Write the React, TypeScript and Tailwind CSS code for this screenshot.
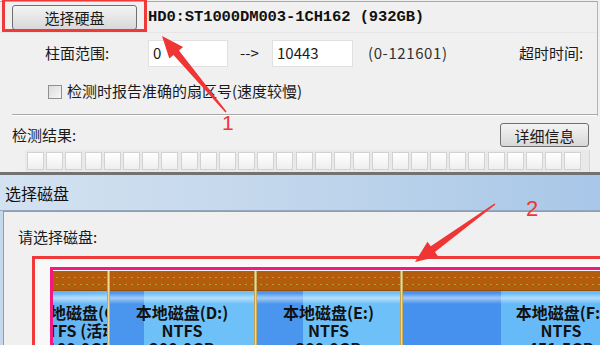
import React from "react";

const cjk = "font-['Noto_Sans_CJK_SC',sans-serif]";

function Cell({
  widthClass,
  bgClass,
  lines,
}: {
  widthClass: string;
  bgClass: string;
  lines: string[];
}) {
  return (
    <div className={`${widthClass} shrink-0 h-full flex flex-col overflow-hidden`}>
      <div className="h-[20px] shrink-0 bg-[#b25c0c] bg-[radial-gradient(circle,#a8a23c_0.7px,transparent_1.1px)] bg-[length:6px_7px] bg-[position:1px_3px] border-b border-[#94500a]" />
      <div className={`flex-1 ${bgClass} flex flex-col items-center pt-[12px] leading-[18px] text-[16px] font-bold text-[#111] whitespace-nowrap`}>
        {lines.map((l) => (
          <div key={l} className="h-[18px]">{l}</div>
        ))}
      </div>
    </div>
  );
}

function Divider() {
  return <div className="w-[3px] shrink-0 h-full bg-[linear-gradient(to_right,#a88a3c,#f0d890,#b89a48)]" />;
}

export default function App() {
  const cells = Array.from({ length: 29 }, (_, i) => i);
  return (
    <div className={`relative w-[600px] h-[345px] overflow-hidden bg-[#f0f0f0] ${cjk} text-[#1a1a1a]`}>
      {/* main window */}
      <div className="h-[172px] flex flex-col pt-[1px]">
        <div className="w-[598px] border-r border-[#b4b4b4] flex flex-col">
          <div className="h-px bg-[#a8a8a8]" />
          {/* row 1 */}
          <div className="h-[31px] pt-[3px] pl-[12px] flex items-start border-b border-[#e6e6e6]">
            <div className="w-[125px] h-[25px] rounded-[3px] border border-[#707070] bg-[linear-gradient(to_bottom,#f4f4f4,#e6e6e6_50%,#d8d8d8)] flex items-center justify-center text-[15px] leading-none">
              选择硬盘
            </div>
            <div className="ml-[11px] h-[25px] flex items-center font-['Liberation_Mono','Noto_Sans_CJK_SC',monospace] font-bold text-[15.5px] tracking-[-0.1px] text-[#111]">
              HD0:ST1000DM003-1CH162 (932GB)
            </div>
          </div>
          {/* row 2 */}
          <div className="mt-[7px] h-[27px] flex items-center text-[15px]">
            <div className="pl-[45px] w-[148px]">柱面范围:</div>
            <div className="w-[80px] h-[27px] bg-white border border-[#e0e0e0] flex items-center pl-[4px] text-[15px]">0</div>
            <div className="ml-[12px] w-[32px] text-[15px]">--&gt;</div>
            <div className="w-[81px] h-[27px] bg-white border border-[#e0e0e0] flex items-center pl-[4px] text-[15px]">10443</div>
            <div className="ml-[15px] w-[151px] text-[15px] tracking-[0.6px] text-[#333]">(0-121601)</div>
            <div className="text-[15px]">超时时间:</div>
          </div>
          {/* row 3 */}
          <div className="mt-[17px] h-[15px] flex items-center text-[15px]">
            <div className="ml-[48px] w-[14px] h-[14px] border border-[#8e8f8f] bg-[linear-gradient(135deg,#dcdcdc,#f6f6f6)]" />
            <div className="ml-[5px] whitespace-nowrap">检测时报告准确的扇区号(速度较慢)</div>
          </div>
          <div className="mt-[15px] ml-[12px] h-[2px] bg-[#a8a8a8] border-b border-white" />
        </div>
        {/* row 4 */}
        <div className="mt-[7px] h-[24px] flex items-center text-[15px]">
          <div className="ml-[12px] flex-1">检测结果:</div>
          <div className="mr-[11px] w-[89px] h-[24px] rounded-[3px] border border-[#707070] bg-[linear-gradient(to_bottom,#f4f4f4,#e6e6e6_50%,#d8d8d8)] flex items-center justify-center leading-none">
            详细信息
          </div>
        </div>
        {/* grid */}
        <div className="mt-[3px] ml-[25px] w-[565px] h-[22px] bg-[#e9e9e9] border-r border-[#d6d6d6] flex gap-[2.2px] px-[2px] pt-[2px]">
          {cells.map((i) => (
            <div key={i} className="w-[17px] h-[18px] shrink-0 border border-[#d2d2d2] bg-[linear-gradient(to_bottom,#ffffff,#eeeeee)]" />
          ))}
        </div>
      </div>

      {/* dialog */}
      <div className="h-[3px] bg-[#727272]" />
      <div className="h-[36px] bg-[linear-gradient(to_right,#d3e2f1,#c3d7ec_45%,#a8c7e8)] border-b border-[#94a8bf] flex items-center pl-[5px] text-[16px] text-[#111]">
        选择磁盘
      </div>
      <div className="flex h-[140px] bg-[#c6d8ec]">
        <div className="ml-[3px] flex-1 border-l border-t border-[#9a9a9a] bg-[#f0f0f0] flex flex-col">
          <div className="mt-[16px] pl-[14px] h-[18px] leading-[18px] text-[15px]">请选择磁盘:</div>
          <div className="mt-[10px] ml-[28px] w-[700px] flex-1 border-[3px] border-r-0 border-b-0 border-[#f03a3a] bg-[#f8f8f8] pt-[8px] pl-[15px]">
            <div className="h-full border-[3px] border-r-0 border-b-0 border-[#f5197f] pt-px bg-[#f8f8f8] flex">
              <Cell
                widthClass="w-[54px]"
                bgClass="bg-[linear-gradient(to_bottom,rgba(255,255,255,0)_2px,rgba(255,255,255,0.55)_7px,rgba(255,255,255,0)_13px),linear-gradient(to_right,#62b2f4,#6cbcf8)]"
                lines={["本地磁盘(C:)", "NTFS (活动)", "100.0GB"]}
              />
              <Divider />
              <Cell
                widthClass="w-[144px]"
                bgClass="bg-[linear-gradient(to_bottom,rgba(255,255,255,0)_2px,rgba(255,255,255,0.5)_7px,rgba(255,255,255,0)_13px),linear-gradient(to_right,#4a96ef_0,#4a96ef_34px,#6ec0f8_34px)]"
                lines={["本地磁盘(D:)", "NTFS", "200.0GB"]}
              />
              <Divider />
              <Cell
                widthClass="w-[143px]"
                bgClass="bg-[linear-gradient(to_bottom,rgba(255,255,255,0)_2px,rgba(255,255,255,0.5)_7px,rgba(255,255,255,0)_13px),linear-gradient(to_right,#4a96ef_0,#4a96ef_46px,#6ec0f8_46px)]"
                lines={["本地磁盘(E:)", "NTFS", "200.0GB"]}
              />
              <Divider />
              <Cell
                widthClass="w-[316px]"
                bgClass="bg-[linear-gradient(to_bottom,rgba(255,255,255,0)_2px,rgba(255,255,255,0.5)_7px,rgba(255,255,255,0)_13px),linear-gradient(to_right,#4690ee_0,#4690ee_98px,#66baf8_98px)]"
                lines={["本地磁盘(F:)", "NTFS", "451.5GB"]}
              />
            </div>
          </div>
        </div>
      </div>

      {/* annotations */}
      <div className="absolute left-[2px] top-[-2px] w-[145px] h-[34px] border-[3px] border-[#f03a3a]" />
      <svg className="absolute left-0 top-0 pointer-events-none" width="600" height="345" viewBox="0 0 600 345">
        <polygon
          fill="#f03535"
          points="162,36 183.1,47 178.9,50.5 226.6,111.5 225.4,112.5 173.5,55.1 169.3,58.6"
        />
        <polygon
          fill="#f03535"
          points="415,262 438.1,256.4 434.9,251.9 495.5,204.6 494.5,203.4 430.7,246.3 427.5,241.8"
        />
      </svg>
      <div className="absolute left-[222px] top-[112px] text-[21px] leading-none text-[#f03535] font-['Liberation_Sans',sans-serif]">1</div>
      <div className="absolute left-[526px] top-[198px] text-[22px] leading-none text-[#f03535] font-['Liberation_Sans',sans-serif]">2</div>
    </div>
  );
}
